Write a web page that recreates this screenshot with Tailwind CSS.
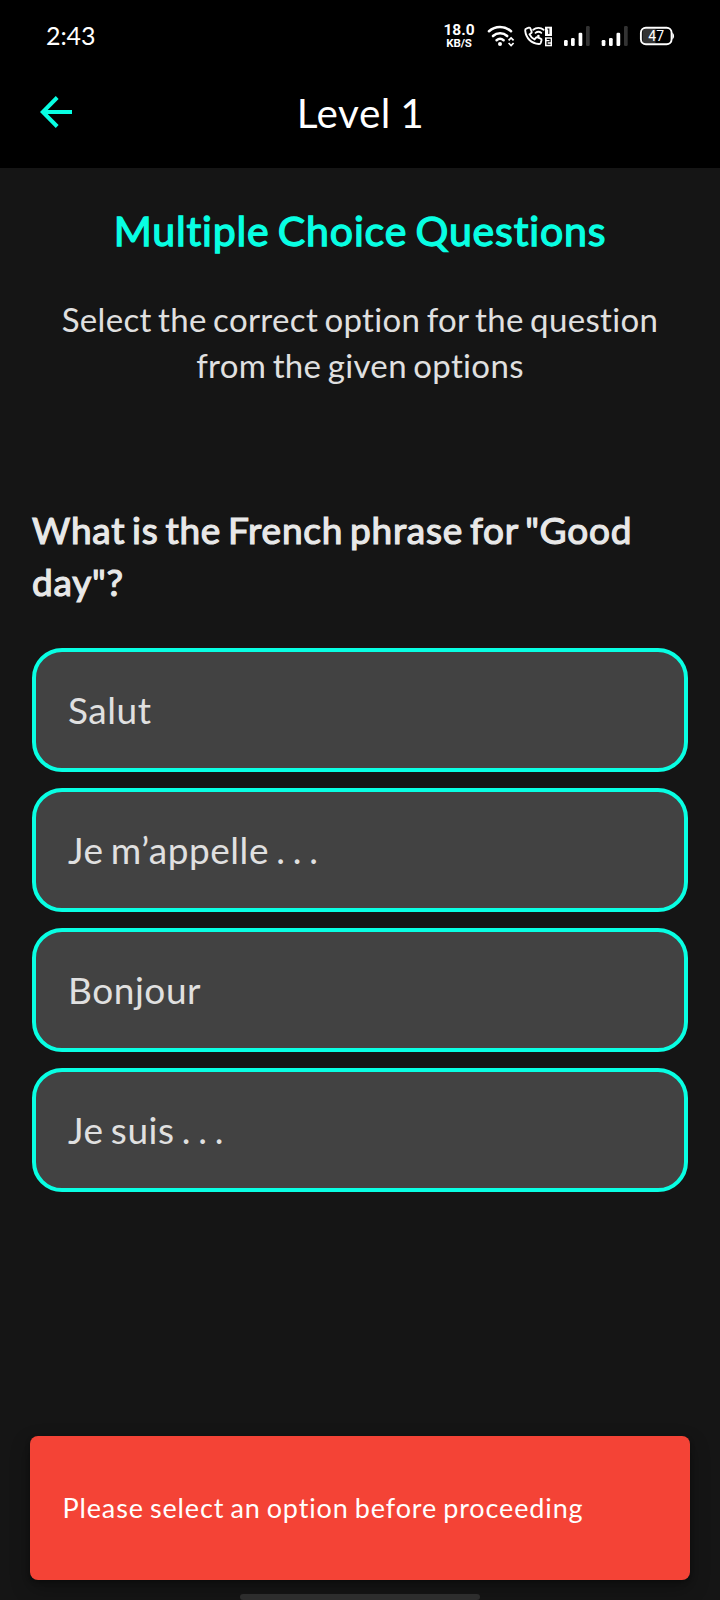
<!DOCTYPE html>
<html lang="en">
<head>
<meta charset="utf-8">
<title>Level 1</title>
<script src="https://cdn.jsdelivr.net/npm/@tailwindcss/browser@4"></script>
</head>
<body class="bg-[#151515]">
<div class="relative w-[720px] h-[1600px] overflow-hidden bg-[#151515] font-['Lato',sans-serif] flex flex-col">
  <header class="h-[168px] shrink-0 bg-black text-white">
    <div class="h-14 pt-[15px] pl-[46px] pr-[47px] flex justify-between items-start">
      <span class="text-[25px] leading-10 tracking-[-0.1px]">2:43</span>
      <div class="flex items-start">
        <div class="w-[32px] pt-[9px] mr-[12px] font-['Roboto',sans-serif] font-bold text-center whitespace-nowrap">
          <div class="text-[15.5px] leading-[13px]">18.0</div>
          <div class="text-[11.5px] leading-[13px] tracking-[-0.1px]">KB/S</div>
        </div>
        <svg class="w-[186px] h-[24px] mt-[9px]" viewBox="487 24 186 24" fill="none" stroke="#fff" overflow="visible">
          <!-- Wi-Fi -->
          <g stroke-width="2.6" stroke-linecap="round">
            <path d="M489 31.2a16.4 16.4 0 0 1 22 0"/>
            <path d="M493 36a10.6 10.6 0 0 1 14.2 0"/>
            <path d="M496.6 40.2a5.5 5.5 0 0 1 7 0"/>
          </g>
          <circle cx="500" cy="44" r="2" fill="#fff" stroke="none"/>
          <path d="M508.6 40.4l2.5-2.5 2.5 2.5M508.6 43l2.5 2.5 2.5-2.5" stroke-width="1.7"/>
          <!-- Wi-Fi calling -->
          <path d="M526.3 28.6l2.5-.9c.8-.2 1.3.1 1.6.8l1.2 3c.3.8 0 1.4-.6 1.8l-1.4 1c1 2.2 2.7 4 5 5.1l1.2-1.5c.5-.6 1.1-.8 1.8-.5l3 1.2c.8.3 1.1.9.9 1.7l-.7 2.4c-.3.9-.9 1.4-1.9 1.3-7.6-.6-12.9-5.7-13.7-13.4-.1-1 .2-1.7 1.1-2z" stroke-width="1.9"/>
          <path d="M533.2 29.8a8 8 0 0 1 10.4 0M535.5 32.9a4.6 4.6 0 0 1 5.8 0" stroke-width="1.8" stroke-linecap="round"/>
          <circle cx="538.4" cy="36" r="1.3" fill="#fff" stroke="none"/>
          <rect x="545" y="26.7" width="7" height="9.3" fill="#fff" stroke="none"/>
          <rect x="545" y="37.3" width="7" height="9" fill="#fff" stroke="none"/>
          <path d="M547.4 29h1.4v5M546.7 39.4h3.4v2.3h-3v2.6h3.5" stroke="#000" stroke-width="1.1"/>
          <!-- Signal bars -->
          <g fill="#fff" stroke="none">
            <rect x="564" y="40" width="3.7" height="6" rx="1.2"/><rect x="571" y="38" width="3.7" height="8" rx="1.2"/><rect x="578.6" y="32.7" width="3.7" height="13.3" rx="1.2"/>
            <rect x="601.7" y="40" width="3.7" height="6" rx="1.2"/><rect x="609" y="38" width="3.7" height="8" rx="1.2"/><rect x="616.5" y="32.7" width="3.7" height="13.3" rx="1.2"/>
          </g>
          <g fill="#333" stroke="none"><rect x="586" y="26" width="3.7" height="20" rx="1.2"/><rect x="624" y="26" width="3.7" height="20" rx="1.2"/></g>
          <!-- Battery -->
          <path d="M645 29h10.5v14.5H645a2.5 2.5 0 0 1-2.5-2.5v-9.5a2.5 2.5 0 0 1 2.5-2.5z" fill="#333" stroke="none"/>
          <rect x="640.9" y="27.7" width="30.7" height="16.6" rx="5" stroke-width="1.9"/>
          <path d="M672.3 32.5q1.8 1 1.8 3.5t-1.8 3.5z" fill="#fff" stroke="none"/>
          <text x="656.2" y="40.9" text-anchor="middle" font-family="Roboto" font-size="14" fill="#fff" stroke="none">47</text>
        </svg>
      </div>
    </div>
    <div class="h-28 grid grid-cols-[80px_1fr_80px] items-center">
      <svg class="w-8 h-8 ml-10" viewBox="0 0 32 32" fill="none" stroke="#08ffe3" stroke-width="4"><path d="M32 16H4M17.2 1.5L2.8 16l14.4 14.5"/></svg>
      <h1 class="pt-0.5 pl-px text-center text-[40.5px] leading-[48px] tracking-[0.5px] [word-spacing:-1.5px]">Level 1</h1>
    </div>
  </header>
  <main class="px-8 pt-[34px]">
    <h2 class="text-center text-[41px] leading-[58px] tracking-[0.85px] [word-spacing:-3px] text-[#08ffe3] [-webkit-text-stroke:1.3px_#08ffe3] whitespace-nowrap">Multiple Choice Questions</h2>
    <p class="mt-9 text-center text-[33px] leading-[46px] tracking-[0.35px] [word-spacing:-2.5px] text-[#e0e0e0] whitespace-nowrap">Select the correct option for the question<br>from the given options</p>
    <p class="mt-[116px] text-[37px] leading-[52px] tracking-[0.77px] [word-spacing:-3.4px] text-[#e8e8e8] [-webkit-text-stroke:1.2px_#e8e8e8] whitespace-nowrap">What is the French phrase for "Good<br>day"?</p>
    <div class="mt-10 flex flex-col gap-4 text-[37px] leading-[52px] tracking-[0.55px] [word-spacing:-2.8px] text-[#e0e0e0]">
      <div class="h-[124px] rounded-[30px] border-4 border-[#08ffe3] bg-[#424242] px-8 flex items-center">Salut</div>
      <div class="h-[124px] rounded-[30px] border-4 border-[#08ffe3] bg-[#424242] px-8 flex items-center">Je m’appelle . . .</div>
      <div class="h-[124px] rounded-[30px] border-4 border-[#08ffe3] bg-[#424242] px-8 flex items-center">Bonjour</div>
      <div class="h-[124px] rounded-[30px] border-4 border-[#08ffe3] bg-[#424242] px-8 flex items-center">Je suis . . .</div>
    </div>
  </main>
  <div class="mt-auto mx-[30px] mb-[14px] h-36 shrink-0 rounded-lg bg-[#f44336] px-8 flex items-center text-white shadow-[0_8px_20px_rgba(0,0,0,0.3),0_2px_5px_rgba(0,0,0,0.3)]">
    <span class="pl-[0.5px] text-[27px] leading-[36px] tracking-[0.87px] [word-spacing:-1.7px] whitespace-nowrap">Please select an option before proceeding</span>
  </div>
  <div class="relative shrink-0 self-center w-60 h-1.5 rounded-[3px] bg-[#2d2d2d]"></div>
</div>
</body>
</html>
